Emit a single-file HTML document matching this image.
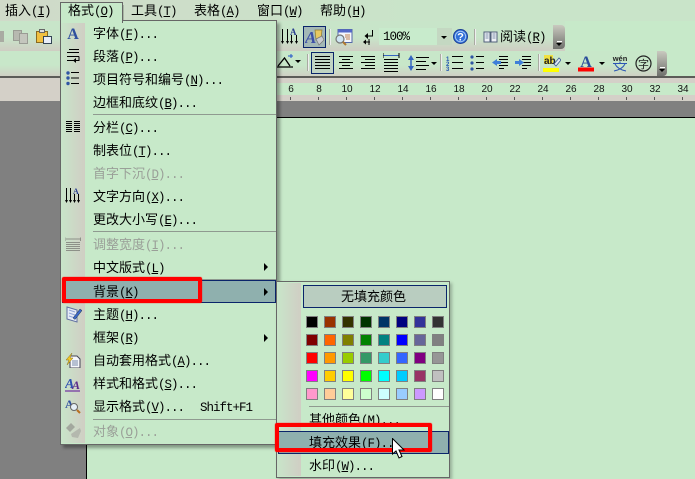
<!DOCTYPE html>
<html><head><meta charset="utf-8"><style>
html,body{margin:0;padding:0}
#p{position:relative;width:695px;height:479px;overflow:hidden;background:#c7e9c9;font-family:"WenQuanYi Zen Hei","Noto Sans CJK SC",sans-serif;color:#000}
#p div,#p svg{position:absolute}
.t{font-size:13px;line-height:16px;white-space:nowrap;height:16px}
i{font:normal 12.5px/16px "Liberation Mono",monospace;letter-spacing:-1px}
.d{color:#9a9f98}
.s{height:1px;background:#8f9a90}
.n{font:10px/12px "Liberation Sans",sans-serif;top:84px;width:16px;text-align:center;color:#111}
.k{top:97px;width:1px;height:3px;background:#555}
.c{width:10px;height:10px;border:1px solid #808080}
.a{width:0;height:0;border-left:3px solid transparent;border-right:3px solid transparent;border-top:3px solid #000}
.r{width:0;height:0;border-top:4px solid transparent;border-bottom:4px solid transparent;border-left:4px solid #000}
.v{width:1px;background:#a9aaa2;border-right:1px solid #eee}
</style></head><body><div id="p">

<div style="left:0;top:0;width:695px;height:21px;background:linear-gradient(90deg,#d0dac9,#c9e4c9 60%)"></div>
<div style="left:0;top:21px;width:565px;height:30px;background:linear-gradient(#c8e5c9,#c8e5c9 55%,#cfcdc3)"></div>
<div style="left:0;top:51px;width:667px;height:26px;background:linear-gradient(#c8e7c9,#c8e7c9 55%,#d0cec4)"></div>
<div style="left:553px;top:25px;width:12px;height:24px;background:linear-gradient(#c9c9bf,#6f706c);border-radius:0 4px 4px 0"></div>
<div style="left:657px;top:51px;width:10px;height:25px;background:linear-gradient(#c9c9bf,#6f706c);border-radius:0 4px 4px 0"></div>
<div style="left:557px;top:41px;width:5px;height:1px;background:#fff"></div>
<div style="left:556px;top:43px;width:0;height:0;border-left:3px solid transparent;border-right:3px solid transparent;border-top:3px solid #000"></div>
<div style="left:660px;top:67px;width:5px;height:1px;background:#fff"></div>
<div style="left:659px;top:69px;width:0;height:0;border-left:3px solid transparent;border-right:3px solid transparent;border-top:3px solid #000"></div>

<div style="left:0;top:76px;width:695px;height:2px;background:#5c5c58"></div>
<div style="left:0;top:78px;width:695px;height:23px;background:#d4d0c8"></div>
<div style="left:87px;top:83px;width:608px;height:12px;background:#c7e9c9"></div>
<div style="left:0;top:101px;width:695px;height:16px;background:#808080"></div>
<div style="left:0;top:117px;width:87px;height:362px;background:#808080"></div>
<div style="left:86px;top:117px;width:609px;height:1px;background:#000"></div>
<div style="left:86px;top:117px;width:1px;height:362px;background:#000"></div>

<div class="n" style="left:283px">6</div><div class="n" style="left:311px">8</div><div class="n" style="left:339px">10</div><div class="n" style="left:367px">12</div><div class="n" style="left:395px">14</div><div class="n" style="left:423px">16</div><div class="n" style="left:451px">18</div><div class="n" style="left:479px">20</div><div class="n" style="left:507px">22</div><div class="n" style="left:535px">24</div><div class="n" style="left:563px">26</div><div class="n" style="left:591px">28</div><div class="n" style="left:619px">30</div><div class="n" style="left:647px">32</div><div class="n" style="left:675px">34</div>
<div class="k" style="left:290px"></div><div class="k" style="left:318px"></div><div class="k" style="left:346px"></div><div class="k" style="left:374px"></div><div class="k" style="left:402px"></div><div class="k" style="left:430px"></div><div class="k" style="left:458px"></div><div class="k" style="left:486px"></div><div class="k" style="left:514px"></div><div class="k" style="left:542px"></div><div class="k" style="left:570px"></div><div class="k" style="left:598px"></div><div class="k" style="left:626px"></div><div class="k" style="left:654px"></div><div class="k" style="left:682px"></div>

<div class="t" style="left:5px;top:2px">插入<i>(<u>I</u>)</i></div>
<div class="t" style="left:131px;top:2px">工具<i>(<u>T</u>)</i></div>
<div class="t" style="left:194px;top:2px">表格<i>(<u>A</u>)</i></div>
<div class="t" style="left:257px;top:2px">窗口<i>(<u>W</u>)</i></div>
<div class="t" style="left:320px;top:2px">帮助<i>(<u>H</u>)</i></div>

<svg style="left:0;top:25px" width="60" height="25" viewBox="0 0 60 25">
<rect x="0" y="6" width="4" height="11" fill="#a9aba2"/>
<rect x="13.500" y="5.500" width="8" height="10" fill="#b7b9b0" stroke="#9a9c94"/><rect x="19.500" y="8.500" width="8" height="10" fill="#c4c6bd" stroke="#9a9c94"/>
<rect x="36.500" y="6.500" width="11" height="11" fill="#f0c040" stroke="#8a6a20"/><rect x="39.500" y="4.500" width="5" height="3" fill="#ddd" stroke="#666"/><rect x="43.500" y="11.500" width="8" height="7" fill="#e8eef8" stroke="#345"/>
</svg>

<!-- row 1 right -->
<div style="left:303px;top:26px;width:21px;height:20px;border:1px solid #0a246a;background:#a3b8b6"></div>
<svg style="left:280px;top:26px" width="20" height="22" viewBox="0 0 20 22" stroke="#000" fill="none"><path d="M2.500 3V17M7.500 3V17M11.500 9V17M16.500 9V17"/><path d="M1 15l1.500 3 1.500-3zM6 15l1.500 3 1.500-3zM10 15l1.500 3 1.500-3zM15 15l1.500 3 1.500-3z" fill="#000" stroke="none"/><text x="10" y="9" font-size="9" font-family="Liberation Serif" font-weight="bold" fill="#2a3f8f" stroke="none">A</text></svg>
<svg style="left:305px;top:28px" width="20" height="18" viewBox="0 0 20 18"><text x="0" y="15" font-size="17" font-style="italic" font-weight="bold" font-family="Liberation Serif" fill="#3d4fa8">A</text><path d="M10 2l7 0-1 9-5 1z" fill="#e8c860" stroke="#8c7a30" stroke-width=".7"/><path d="M11 11l6-3 2 4-5 5z" fill="#c8ccd0" stroke="#777" stroke-width=".7"/></svg>
<div class="v" style="left:329px;top:29px;height:16px"></div>
<svg style="left:334px;top:28px" width="20" height="20" viewBox="0 0 20 20"><rect x="4" y="1.500" width="14" height="13" fill="#f4f6fb" stroke="#5468a8"/><rect x="4" y="1.500" width="14" height="3" fill="#5468c8"/><path d="M11 7h5M11 9h5M12 11h4" stroke="#c08050"/><circle cx="6" cy="11" r="4" fill="#cfe6f4" stroke="#777" stroke-width="1.200"/><path d="M9 14l3 3" stroke="#b07830" stroke-width="2"/></svg>
<svg style="left:361px;top:29px" width="14" height="17" viewBox="0 0 14 17" fill="none" stroke="#000"><path d="M11.500 1v6H6M6 7"/><path d="M7 4v6L3.500 7z" fill="#000" stroke="none"/><path d="M8 10v6M4 13h5"/><path d="M2 13l3-2.500v5z" fill="#000" stroke="none"/></svg>
<div style="left:379px;top:28px;width:58px;height:17px;background:#c8ebcc"></div>
<div style="left:437px;top:28px;width:15px;height:17px;background:#c4d8c2"></div>
<div class="t" style="left:383px;top:27px"><i>100%</i></div>
<div class="a" style="left:441px;top:36px"></div>
<svg style="left:452px;top:28px" width="17" height="17" viewBox="0 0 17 17"><circle cx="8.500" cy="8.500" r="7" fill="#2f6fd8" stroke="#1c3f96"/><circle cx="8.500" cy="8.500" r="5.200" fill="none" stroke="#a8c8f4"/><text x="8.500" y="12.500" font-size="11" font-weight="bold" font-family="Liberation Sans" text-anchor="middle" fill="#fff">?</text></svg>
<div class="v" style="left:474px;top:29px;height:16px"></div>
<svg style="left:483px;top:30px" width="15" height="14" viewBox="0 0 15 14"><path d="M1 2h6v10H1zM8 2h6v10H8z" fill="#eef1f6" stroke="#50607a"/><path d="M2.500 4h3M2.500 6h3M2.500 8h3M9.500 4h3M9.500 6h3M9.500 8h3" stroke="#8294ad"/></svg>
<div class="t" style="left:500px;top:28px">阅读<i>(<u>R</u>)</i></div>

<!-- row 2 right -->
<svg style="left:277px;top:53px" width="18" height="16" viewBox="0 0 18 16" fill="none"><path d="M1 13L7.500 5 13 13M0 14h16" stroke="#000" stroke-width="1.300"/><path d="M11 3h5M14 1v4" stroke="#2255cc"/></svg>
<div class="a" style="left:295px;top:60px"></div>
<div class="v" style="left:307px;top:54px;height:17px"></div>
<div style="left:311px;top:52px;width:21px;height:20px;border:1px solid #0a246a;background:#c0d4c4"></div>
<svg style="left:315px;top:55px" width="62" height="16" viewBox="0 0 62 16" stroke="#000"><path d="M0 1.500H15M0 4.500H15M0 7.500H15M0 10.500H15M0 13.500H15"/><path d="M24 1.500H38M27 4.500H35M24 7.500H38M27 10.500H35M24 13.500H38"/><path d="M46 1.500H60M50 4.500H60M46 7.500H60M50 10.500H60M46 13.500H60"/></svg>
<svg style="left:383px;top:52px" width="17" height="21" viewBox="0 0 17 21" fill="none" stroke="#000"><path d="M0 3.500H16" stroke="#3565c0"/><path d="M0 1v5M16 1v5" stroke="#000"/><path d="M1 7.500H15M1 10.500H15M1 13.500H15M1 16.500H15M1 19.500H15"/></svg>
<svg style="left:407px;top:54px" width="25" height="18" viewBox="0 0 25 18" fill="none"><path d="M4 4v10" stroke="#3565c0" stroke-width="1.500"/><path d="M1 6l3-5 3 5zM1 12l3 5 3-5z" fill="#3565c0"/><path d="M9 3.500H22M9 7.500H19M9 11.500H22M9 15.500H19" stroke="#000"/></svg>
<div class="a" style="left:431px;top:62px"></div>
<div class="v" style="left:440px;top:54px;height:17px"></div>
<svg style="left:446px;top:55px" width="18" height="16" viewBox="0 0 18 16"><text x="0" y="6" font-size="6" font-family="Liberation Sans" font-weight="bold" fill="#2255b0">1</text><text x="0" y="11" font-size="6" font-family="Liberation Sans" font-weight="bold" fill="#2255b0">2</text><text x="0" y="16" font-size="6" font-family="Liberation Sans" font-weight="bold" fill="#2255b0">3</text><path d="M6 1.500H17M6 7.500H17M6 13.500H17" stroke="#000"/></svg>
<svg style="left:470px;top:55px" width="15" height="16" viewBox="0 0 15 16"><circle cx="2" cy="2" r="1.600" fill="#2f55a4"/><circle cx="2" cy="8" r="1.600" fill="#2f55a4"/><circle cx="2" cy="14" r="1.600" fill="#2f55a4"/><path d="M6 1.500H14M6 7.500H14M6 13.500H14" stroke="#000"/></svg>
<svg style="left:492px;top:55px" width="17" height="16" viewBox="0 0 17 16"><path d="M7 1.500H16M7 4.500H16M7 7.500H16M7 10.500H16M7 13.500H12" stroke="#000"/><path d="M0 7.500l5-3.500v2h4v3H5v2z" fill="#3f7fd8"/></svg>
<svg style="left:515px;top:55px" width="17" height="16" viewBox="0 0 17 16"><path d="M7 1.500H16M7 4.500H16M7 7.500H16M7 10.500H16M7 13.500H12" stroke="#000"/><path d="M9 7.500L4 4v2H0v3h4v2z" fill="#3f7fd8"/></svg>
<div class="v" style="left:538px;top:54px;height:17px"></div>
<svg style="left:543px;top:54px" width="18" height="18" viewBox="0 0 18 18"><rect x="1" y="1" width="9" height="9" fill="#f0e040"/><text x="1" y="10" font-size="10" font-family="Liberation Sans" font-weight="bold" fill="#222">ab</text><path d="M11 10l5-6 2 2-5 6z" fill="#dfe8f4" stroke="#3a5a90" stroke-width=".8"/><rect x="0" y="14" width="16" height="4" fill="#ffff00"/></svg>
<div class="a" style="left:565px;top:62px"></div>
<svg style="left:578px;top:54px" width="17" height="18" viewBox="0 0 17 18"><text x="8" y="13" font-size="16" font-family="Liberation Serif" font-weight="bold" text-anchor="middle" fill="#2a4c9a">A</text><rect x="0" y="13.500" width="16" height="4" fill="#ff0000"/></svg>
<div class="a" style="left:599px;top:62px"></div>
<svg style="left:611px;top:55px" width="18" height="17" viewBox="0 0 18 17"><text x="9" y="6" font-size="7.500" font-weight="bold" font-family="Liberation Sans" text-anchor="middle" fill="#222">wén</text><path d="M2 8.500H16M9 6.500v2M4 9c2 4 6 6 11 7M14 9c-2 4-6 6-11 7" stroke="#2c55b4" fill="none"/></svg>
<svg style="left:634px;top:55px" width="19" height="17" viewBox="0 0 19 17"><circle cx="9.500" cy="8.500" r="7.500" fill="none" stroke="#222" stroke-width="1.200"/><text x="9.500" y="13" font-size="11" text-anchor="middle" fill="#222" font-family="WenQuanYi Zen Hei,Noto Sans CJK SC,sans-serif">字</text></svg>

<!-- format tab -->
<div style="left:60px;top:2px;width:61px;height:20px;border:1px solid #666;border-bottom:0;background:#c7e9c9;z-index:3"></div>
<div style="left:122px;top:5px;width:2px;height:16px;background:rgba(0,0,0,.18)"></div>
<div class="t" style="left:68px;top:2px;z-index:4">格式<i>(<u>O</u>)</i></div>

<!-- format menu -->
<div style="left:60px;top:20px;width:215px;height:423px;border:1px solid #666;background:#c7e9c9;box-shadow:3px 3px 3px rgba(0,0,0,.35);z-index:2"></div>
<div style="left:61px;top:21px;width:24px;height:422px;background:linear-gradient(90deg,#c8e5c9,#d0cec4);z-index:2"></div>
<div id="m" style="left:0;top:0;width:695px;height:479px;z-index:3">
<div class="t" style="left:93px;top:25px">字体<i>(<u>F</u>)...</i></div>
<div class="t" style="left:93px;top:48px">段落<i>(<u>P</u>)...</i></div>
<div class="t" style="left:93px;top:71px">项目符号和编号<i>(<u>N</u>)...</i></div>
<div class="t" style="left:93px;top:94px">边框和底纹<i>(<u>B</u>)...</i></div>
<div class="s" style="left:93px;top:114px;width:183px"></div>
<div class="t" style="left:93px;top:119px">分栏<i>(<u>C</u>)...</i></div>
<div class="t" style="left:93px;top:142px">制表位<i>(<u>T</u>)...</i></div>
<div class="t d" style="left:93px;top:165px">首字下沉<i>(<u>D</u>)...</i></div>
<div class="t" style="left:93px;top:188px">文字方向<i>(<u>X</u>)...</i></div>
<div class="t" style="left:93px;top:211px">更改大小写<i>(<u>E</u>)...</i></div>
<div class="s" style="left:93px;top:231px;width:183px"></div>
<div class="t d" style="left:93px;top:236px">调整宽度<i>(<u>I</u>)...</i></div>
<div class="t" style="left:93px;top:259px">中文版式<i>(<u>L</u>)</i></div>
<div class="r" style="left:264px;top:263px"></div>
<div class="s" style="left:93px;top:279px;width:183px"></div>
<div style="left:62px;top:280px;width:212px;height:21px;border:1px solid #0a246a;background:#8fb0ae"></div>
<div class="t" style="left:93px;top:283px">背景<i>(<u>K</u>)</i></div>
<div class="r" style="left:264px;top:288px"></div>
<div class="t" style="left:93px;top:306px">主题<i>(<u>H</u>)...</i></div>
<div class="t" style="left:93px;top:329px">框架<i>(<u>R</u>)</i></div>
<div class="r" style="left:264px;top:334px"></div>
<div class="t" style="left:93px;top:352px">自动套用格式<i>(<u>A</u>)...</i></div>
<div class="t" style="left:93px;top:375px">样式和格式<i>(<u>S</u>)...</i></div>
<div class="t" style="left:93px;top:398px">显示格式<i>(<u>V</u>)...</i></div>
<div class="t" style="left:200px;top:398px"><i>Shift+F1</i></div>
<div class="s" style="left:93px;top:419px;width:183px"></div>
<div class="t d" style="left:93px;top:423px">对象<i>(<u>O</u>)...</i></div>

<!-- menu icons -->
<svg style="left:65px;top:25px" width="18" height="16" viewBox="0 0 18 16"><text x="8" y="14" font-size="16" font-weight="bold" font-family="Liberation Serif" text-anchor="middle" fill="#2e4f9e">A</text></svg>
<svg style="left:66px;top:48px" width="15" height="16" viewBox="0 0 15 16" fill="none" stroke="#000"><path d="M3 1.500H13M1 4.500H13M1 8.500H13M1 12.500H8M13 8.500V12.500H9"/><path d="M7 12.500l3-2.500v5z" fill="#000" stroke="none"/></svg>
<svg style="left:66px;top:71px" width="14" height="15" viewBox="0 0 14 15"><circle cx="2" cy="2" r="1.700" fill="#2f55a4"/><circle cx="2" cy="7" r="1.700" fill="#2f55a4"/><circle cx="2" cy="12.500" r="1.700" fill="#2f55a4"/><path d="M5 1.500H13M5 7H13M5 12.500H13" stroke="#000"/></svg>
<svg style="left:66px;top:121px" width="14" height="12" viewBox="0 0 14 12" stroke="#000"><path d="M0 .5H6M8 .5H14M0 2.500H6M8 2.500H14M0 4.500H6M8 4.500H14M0 6.500H6M8 6.500H14M0 8.500H6M8 8.500H14M0 10.500H6M8 10.500H14"/></svg>
<svg style="left:65px;top:187px" width="17" height="17" viewBox="0 0 17 17" stroke="#000" fill="none"><path d="M1.500 1V14M5.500 1V14M9.500 7V14M13.500 7V14"/><path d="M0 13l1.500 3 1.500-3zM4 13l1.500 3 1.500-3zM8 13l1.500 3 1.500-3zM12 13l1.500 3 1.500-3z" fill="#000" stroke="none"/><text x="8" y="7" font-size="8" font-family="Liberation Serif" font-weight="bold" fill="#2a3f8f" stroke="none">A</text></svg>
<svg style="left:65px;top:236px" width="16" height="16" viewBox="0 0 16 16" fill="none" stroke="#8d9088"><path d="M0 1.500V5M15.500 1.500V5M1 3H15"/><path d="M1 6.500H15M1 8.500H15M1 10.500H15M1 12.500H15M1 14.500H15"/></svg>
<svg style="left:66px;top:306px" width="16" height="17" viewBox="0 0 16 17"><path d="M1 1l10 3v12L1 13z" fill="#e6ecf7" stroke="#6070a0"/><path d="M3 4l6 2M3 7l6 2M3 10l6 2" stroke="#92a4d8"/><path d="M7 12l7-9 2 1.500-7 9z" fill="#3a66c8" stroke="#234" stroke-width=".5"/></svg>
<svg style="left:66px;top:353px" width="15" height="15" viewBox="0 0 15 15"><path d="M4 3h7l3 3v9H4z" fill="#f6f8fc" stroke="#445"/><path d="M6 8h6M6 10h6M6 12h6" stroke="#7788a8"/><path d="M6 0L0 7h3L1 12l6-7H4z" fill="#f0c828" stroke="#8a7018" stroke-width=".5"/></svg>
<svg style="left:65px;top:376px" width="17" height="16" viewBox="0 0 17 16"><text x="0" y="12" font-size="14" font-style="italic" font-weight="bold" font-family="Liberation Serif" fill="#2f50b0">A</text><text x="7" y="13" font-size="12" font-style="italic" font-weight="bold" font-family="Liberation Serif" fill="#5a2a8a">A</text><path d="M0 15H15" stroke="#7030a0" stroke-width="1.200"/></svg>
<svg style="left:65px;top:398px" width="17" height="17" viewBox="0 0 17 17"><text x="0" y="10" font-size="12" font-weight="bold" font-family="Liberation Serif" fill="#2f50a0">A</text><circle cx="9" cy="9" r="3.500" fill="#e6f0f8" stroke="#666"/><path d="M12 12l3 3" stroke="#b87020" stroke-width="2"/></svg>
<svg style="left:65px;top:422px" width="17" height="17" viewBox="0 0 17 17" fill="#a3a89e"><path d="M1 6l5-5 4 4-5 5z"/><path d="M6 12l9-6 1 3-3 7-6-1z" fill="#b4b8ae"/></svg>
</div>

<!-- submenu -->
<div style="left:276px;top:281px;width:172px;height:195px;border:1px solid #666;background:#c7e9c9;box-shadow:2px 2px 3px rgba(0,0,0,.25);z-index:4"></div>
<div id="sm" style="left:0;top:0;width:695px;height:479px;z-index:5">
<div style="left:277px;top:283px;width:24px;height:193px;background:linear-gradient(90deg,#c8e5c9,#d0cec4)"></div>
<div style="left:303px;top:285px;width:142px;height:21px;border:1px solid #0a246a;background:#b9cdc0"></div>
<div class="t" style="left:341px;top:288px">无填充颜色</div>

<div class="c" style="left:306px;top:316px;background:#000000"></div><div class="c" style="left:324px;top:316px;background:#993300"></div><div class="c" style="left:342px;top:316px;background:#333300"></div><div class="c" style="left:360px;top:316px;background:#003300"></div><div class="c" style="left:378px;top:316px;background:#003366"></div><div class="c" style="left:396px;top:316px;background:#000080"></div><div class="c" style="left:414px;top:316px;background:#333399"></div><div class="c" style="left:432px;top:316px;background:#333333"></div>
<div class="c" style="left:306px;top:334px;background:#800000"></div><div class="c" style="left:324px;top:334px;background:#ff6600"></div><div class="c" style="left:342px;top:334px;background:#808000"></div><div class="c" style="left:360px;top:334px;background:#008000"></div><div class="c" style="left:378px;top:334px;background:#008080"></div><div class="c" style="left:396px;top:334px;background:#0000ff"></div><div class="c" style="left:414px;top:334px;background:#666699"></div><div class="c" style="left:432px;top:334px;background:#808080"></div>
<div class="c" style="left:306px;top:352px;background:#ff0000"></div><div class="c" style="left:324px;top:352px;background:#ff9900"></div><div class="c" style="left:342px;top:352px;background:#99cc00"></div><div class="c" style="left:360px;top:352px;background:#339966"></div><div class="c" style="left:378px;top:352px;background:#33cccc"></div><div class="c" style="left:396px;top:352px;background:#3366ff"></div><div class="c" style="left:414px;top:352px;background:#800080"></div><div class="c" style="left:432px;top:352px;background:#969696"></div>
<div class="c" style="left:306px;top:370px;background:#ff00ff"></div><div class="c" style="left:324px;top:370px;background:#ffcc00"></div><div class="c" style="left:342px;top:370px;background:#ffff00"></div><div class="c" style="left:360px;top:370px;background:#00ff00"></div><div class="c" style="left:378px;top:370px;background:#00ffff"></div><div class="c" style="left:396px;top:370px;background:#00ccff"></div><div class="c" style="left:414px;top:370px;background:#993366"></div><div class="c" style="left:432px;top:370px;background:#c0c0c0"></div>
<div class="c" style="left:306px;top:388px;background:#ff99cc"></div><div class="c" style="left:324px;top:388px;background:#ffcc99"></div><div class="c" style="left:342px;top:388px;background:#ffff99"></div><div class="c" style="left:360px;top:388px;background:#ccffcc"></div><div class="c" style="left:378px;top:388px;background:#ccffff"></div><div class="c" style="left:396px;top:388px;background:#99ccff"></div><div class="c" style="left:414px;top:388px;background:#cc99ff"></div><div class="c" style="left:432px;top:388px;background:#ffffff"></div>

<div class="s" style="left:309px;top:406px;width:140px"></div>
<div class="t" style="left:309px;top:411px">其他颜色<i>(<u>M</u>)...</i></div>
<div style="left:278px;top:431px;width:169px;height:21px;border:1px solid #0a246a;background:#8fb0ae"></div>
<div class="t" style="left:309px;top:434px">填充效果<i>(<u>F</u>)...</i></div>
<div class="t" style="left:309px;top:457px">水印<i>(<u>W</u>)...</i></div>
</div>

<!-- red rects -->
<div style="left:62px;top:277px;width:132px;height:18px;border:4px solid #f00;border-radius:2px;z-index:6;box-shadow:0 0 1px #f00"></div>
<div style="left:275px;top:423px;width:149px;height:21px;border:4px solid #f00;border-radius:2px;z-index:6;box-shadow:0 0 1px #f00"></div>

<!-- cursor -->
<svg style="left:392px;top:438px;z-index:7" width="14" height="22" viewBox="0 0 14 22"><path d="M.5.5V16l3.500-3 3 7 3-1.500-3-6.500h5z" fill="#fff" stroke="#000"/></svg>
</div></body></html>
